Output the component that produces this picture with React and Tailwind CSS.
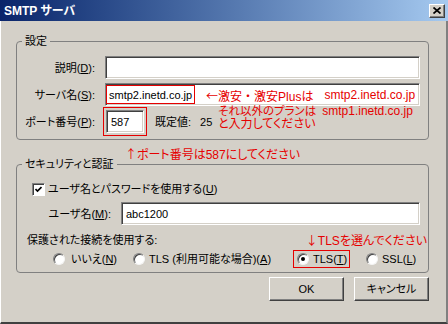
import React from "react";

const RED = "text-[#e60000] text-[12px]";
const ARROW = "font-['Noto_Sans_CJK_JP',sans-serif]";

function Field({ className = "", children }) {
  return (
    <div
      className={`bg-white border border-t-[#808080] border-l-[#808080] border-b-white border-r-white shadow-[inset_1px_1px_0_#404040,inset_-1px_-1px_0_#d4d0c8] flex items-center ${className}`}
    >
      {children}
    </div>
  );
}

function Radio({ checked }) {
  return (
    <span className="w-[12px] h-[12px] shrink-0 rounded-full bg-white border border-t-[#808080] border-l-[#808080] border-b-[#f4f4f4] border-r-[#f4f4f4] shadow-[inset_1px_1px_0_#404040] flex items-center justify-center">
      {checked && <span className="w-[4px] h-[4px] rounded-full bg-black" />}
    </span>
  );
}

function Button({ children }) {
  return (
    <div className="w-[75px] h-[24px] flex items-center justify-center border border-t-white border-l-white border-b-[#404040] border-r-[#404040] shadow-[inset_-1px_-1px_0_#808080]">
      {children}
    </div>
  );
}

export default function App() {
  return (
    <div className="w-[448px] h-[324px] flex flex-col bg-[#d4d0c8] text-black text-[11px] leading-[14px] font-['Liberation_Sans','Noto_Sans_CJK_JP',sans-serif] [font-feature-settings:'palt'] overflow-hidden">
      {/* title bar */}
      <div className="h-[21px] shrink-0 flex items-center justify-between pl-[4px] pr-[3px] bg-gradient-to-r from-[#0a246a] to-[#a6caf0]">
        <span className="text-white font-bold text-[12px] leading-[14px]">SMTP サーバ</span>
        <div className="w-[16px] h-[14px] bg-[#d4d0c8] border border-t-white border-l-white border-b-[#404040] border-r-[#404040] shadow-[inset_-1px_-1px_0_#808080] flex items-center justify-center">
          <svg width="8" height="7" viewBox="0 0 8 7">
            <path d="M0.5 0.5 L7.5 6.5 M7.5 0.5 L0.5 6.5" stroke="black" strokeWidth="1.7" />
          </svg>
        </div>
      </div>

      {/* body */}
      <div className="flex-1 flex flex-col border-l border-l-white border-r-2 border-r-[#808080] border-b-2 border-b-[#404040] pl-[15px] pr-[17px]">
        {/* group 1 */}
        <fieldset className="mt-[13px] border border-[#808080] rounded-[4px] px-0">
          <legend className="ml-[5px] px-[3px] leading-[14px]">設定</legend>
          <div className="grid grid-cols-[78px_1fr] gap-x-[10px] gap-y-[4px] items-center pt-[8px] pb-[6px] pr-[8px]">
            <span className="text-right whitespace-nowrap">
              説明(<u>D</u>):
            </span>
            <Field className="h-[23px]" />

            <span className="text-right whitespace-nowrap">
              サーバ名(<u>S</u>):
            </span>
            <Field className="h-[23px] relative">
              <span className="h-[19px] flex items-center border border-[#e60000] px-[2px] whitespace-nowrap">
                smtp2.inetd.co.jp
              </span>
              <div className={`absolute left-[100px] top-[5px] z-10 leading-[13.5px] whitespace-nowrap ${RED}`}>
                <div className="flex">
                  <span>
                    <span className={ARROW}>←</span>激安<span className="[font-feature-settings:normal]">・</span>激安Plusは
                  </span>
                  <span className="ml-[11px]">smtp2.inetd.co.jp</span>
                </div>
                <div className="flex pl-[12px]">
                  <span className="text-[11.5px]">それ以外のプランは</span>
                  <span className="ml-[6px]">smtp1.inetd.co.jp</span>
                </div>
                <div className="pl-[12px]">と入力してください</div>
              </div>
            </Field>

            <span className="text-right whitespace-nowrap">
              ポート番号(<u>P</u>):
            </span>
            <div className="flex items-center">
              <Field className="ml-[1px] w-[38px] h-[23px] pl-[4px] outline-1 outline-solid outline-[#e60000] outline-offset-2">
                587
              </Field>
              <span className="ml-[11px]">既定値:</span>
              <span className="ml-[9px]">25</span>
            </div>
          </div>
        </fieldset>

        {/* annotation between groups */}
        <div className={`h-[17px] pt-[9px] leading-[10px] pl-[109px] whitespace-nowrap ${RED}`}>
          <span className={ARROW}>↑</span>ポート番号は587にしてください
        </div>

        {/* group 2 */}
        <fieldset className="border border-[#808080] rounded-[4px] px-0">
          <legend className="ml-[5px] px-[3px] leading-[14px]">セキュリティと認証</legend>
          <div className="flex flex-col pt-[11px] pb-[6px]">
            <div className="flex items-center h-[14px] pl-[15px]">
              <span className="w-[13px] h-[13px] shrink-0 bg-white border border-t-[#808080] border-l-[#808080] border-b-white border-r-white shadow-[inset_1px_1px_0_#404040] flex items-center justify-center">
                <svg width="7" height="7" viewBox="0 0 7 7">
                  <path d="M0.5 3 L2.5 5 L6.5 1" stroke="black" strokeWidth="1.7" fill="none" />
                </svg>
              </span>
              <span className="ml-[3px] whitespace-nowrap">
                ユーザ名とパスワードを使用する(<u>U</u>)
              </span>
            </div>

            <div className="flex items-center mt-[6px] pl-[30px] pr-[8px]">
              <span className="w-[64px] text-right whitespace-nowrap">
                ユーザ名(<u>M</u>):
              </span>
              <Field className="ml-[10px] flex-1 h-[23px] pl-[4px]">abc1200</Field>
            </div>

            <div className="flex items-center justify-between h-[14px] mt-[8px] pl-[10px] pr-[1px] whitespace-nowrap">
              <span>保護された接続を使用する:</span>
              <span className={RED}>
                <span className={ARROW}>↓</span>TLSを選んでください
              </span>
            </div>

            <div className="flex items-center h-[14px] mt-[5px] pl-[36px] whitespace-nowrap">
              <Radio />
              <span className="ml-[6px] w-[44px]">
                いいえ(<u>N</u>)
              </span>
              <span className="ml-[18px]">
                <Radio />
              </span>
              <span className="ml-[4px] w-[140px]">
                TLS (利用可能な場合)(<u>A</u>)
              </span>
              <span className="ml-[4px] w-[57px] h-[18px] flex items-center border border-[#e60000] pl-[3px]">
                <Radio checked />
                <span className="ml-[4px]">
                  TLS(<u>T</u>)
                </span>
              </span>
              <span className="ml-[16px]">
                <Radio />
              </span>
              <span className="ml-[4px]">
                SSL(<u>L</u>)
              </span>
            </div>
          </div>
        </fieldset>

        {/* buttons */}
        <div className="flex justify-end gap-[10px] mt-[4px]">
          <Button>OK</Button>
          <Button>キャンセル</Button>
        </div>
      </div>
    </div>
  );
}
